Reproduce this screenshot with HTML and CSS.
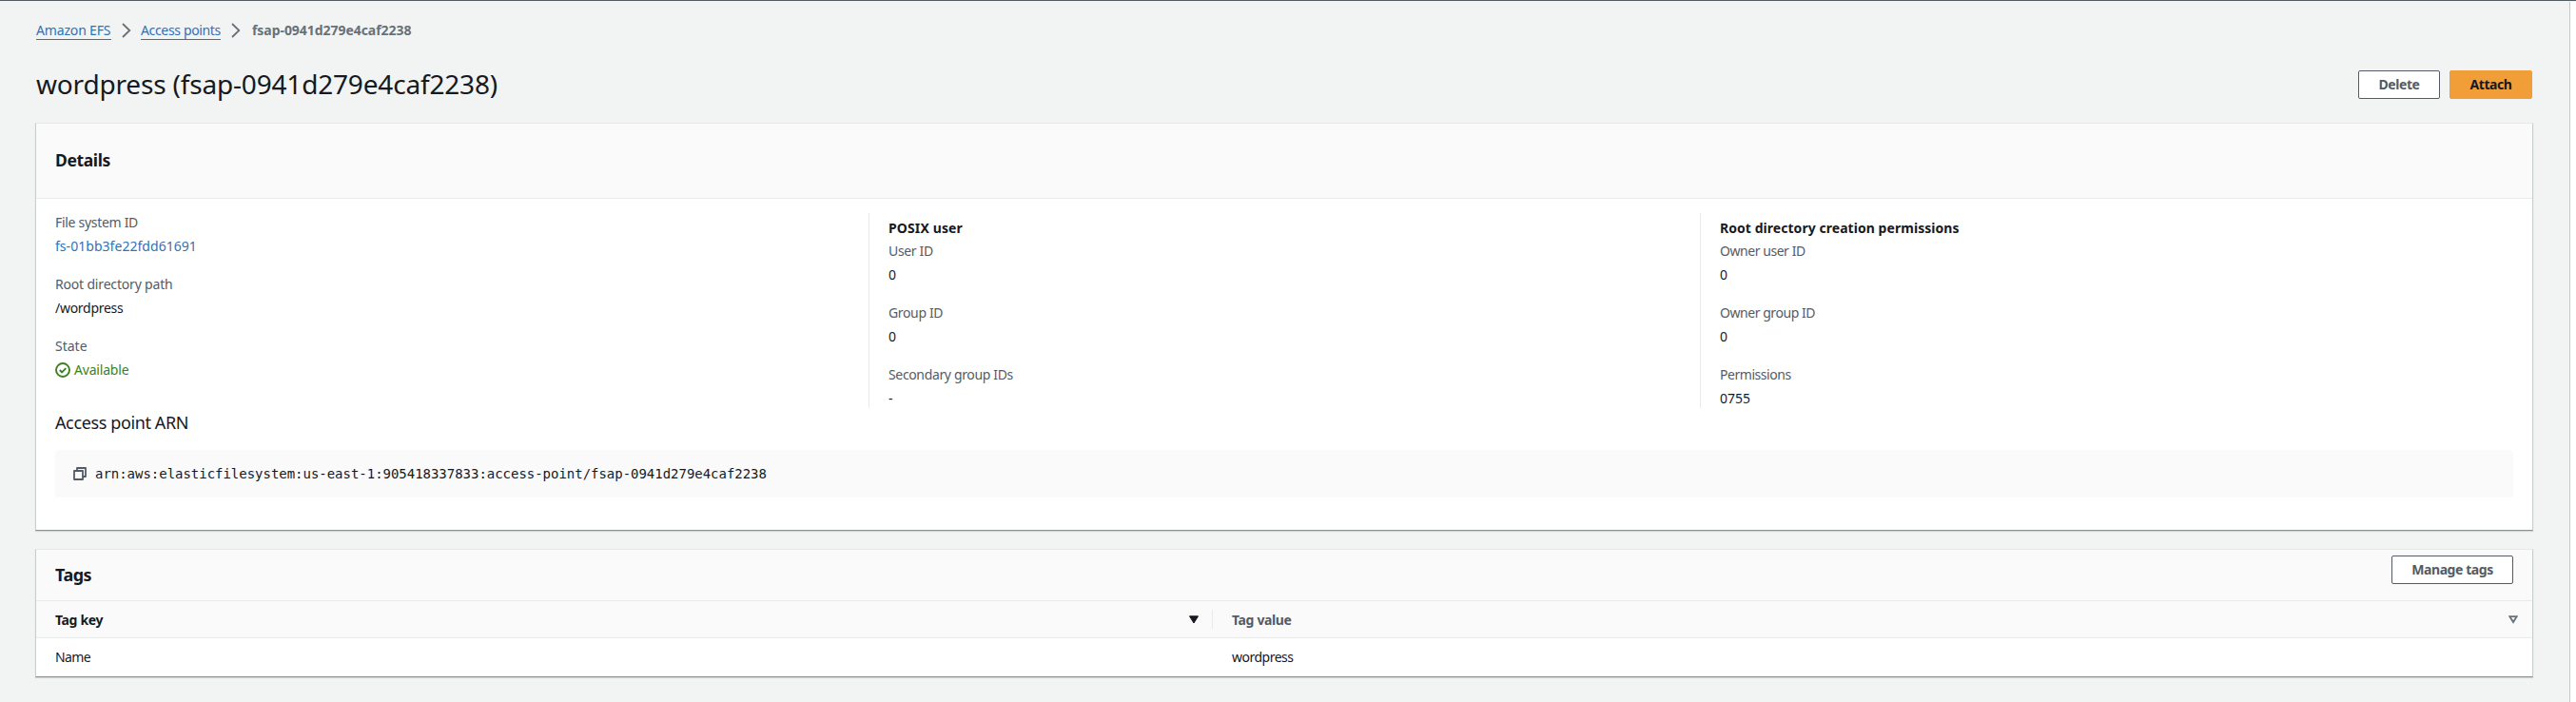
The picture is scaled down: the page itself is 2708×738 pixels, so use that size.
FILE: index.html
```html
<!DOCTYPE html>
<html lang="en">
<head>
<meta charset="utf-8">
<title>wordpress (fsap-0941d279e4caf2238)</title>
<link rel="stylesheet" href="styles.css">
</head>
<body>
<div class="app">
  <main class="main">
    <nav class="crumbs">
      <a class="crumb crumb-root">Amazon EFS</a>
      <svg class="chevron" width="10" height="16" viewBox="0 0 10 16"><path d="M1 1l7.3 7-7.3 7" fill="none" stroke="#687078" stroke-width="1.8"/></svg>
      <a class="crumb crumb-list">Access points</a>
      <svg class="chevron" width="10" height="16" viewBox="0 0 10 16"><path d="M1 1l7.3 7-7.3 7" fill="none" stroke="#687078" stroke-width="1.8"/></svg>
      <span class="crumb-current">fsap-0941d279e4caf2238</span>
    </nav>
    <header class="page-header">
      <h1>wordpress (fsap-0941d279e4caf2238)</h1>
      <div class="actions">
        <button class="btn btn-delete">Delete</button>
        <button class="btn btn-primary">Attach</button>
      </div>
    </header>

    <section class="card">
      <div class="card-head details-head"><h2>Details</h2></div>
      <div class="columns">
        <dl class="col col-first">
          <dt class="fs-label">File system ID</dt><dd class="link">fs-01bb3fe22fdd61691</dd>
          <dt>Root directory path</dt><dd class="path">/wordpress</dd>
          <dt class="state-label">State</dt>
          <dd class="status"><svg width="16" height="16" viewBox="0 0 16 16" fill="none" stroke="#3b8120"><circle cx="8" cy="8" r="7" stroke-width="1.9"/><path d="M4.8 8l2.3 2.3 4.2-4.2" stroke-width="1.9"/></svg><span>Available</span></dd>
        </dl>
        <div class="col col-ruled">
          <h3>POSIX user</h3>
          <dl>
            <dt>User ID</dt><dd>0</dd>
            <dt>Group ID</dt><dd>0</dd>
            <dt>Secondary group IDs</dt><dd>-</dd>
          </dl>
        </div>
        <div class="col col-ruled">
          <h3 class="permissions-title">Root directory creation permissions</h3>
          <dl class="owner">
            <dt>Owner user ID</dt><dd>0</dd>
            <dt>Owner group ID</dt><dd>0</dd>
            <dt>Permissions</dt><dd>0755</dd>
          </dl>
        </div>
      </div>
      <h4>Access point ARN</h4>
      <div class="arn">
        <svg width="14" height="14" viewBox="0 0 14 14" fill="none" stroke="#545b64" stroke-width="1.8" stroke-linejoin="round"><rect x="1" y="4" width="9" height="9"/><path d="M4 4V1h9v9h-3"/></svg>
        <code>arn:aws:elasticfilesystem:us-east-1:905418337833:access-point/fsap-0941d279e4caf2238</code>
      </div>
    </section>

    <section class="card tags">
      <div class="card-head tags-head"><h2>Tags</h2><button class="btn btn-manage">Manage tags</button></div>
      <div class="row row-head">
        <div class="cell cell-key">Tag key<svg width="10" height="9" viewBox="0 0 10 9"><path d="M.5.8h9L5 8z" fill="#16191f" stroke="#16191f" stroke-linejoin="round"/></svg></div>
        <div class="cell cell-value">Tag value<svg width="10" height="9" viewBox="0 0 10 9"><path d="M1.4 1.2h7.2L5 7z" fill="none" stroke="#687078" stroke-width="1.8"/></svg></div>
      </div>
      <div class="row">
        <div class="cell cell-name">Name</div>
        <div class="cell cell-text">wordpress</div>
      </div>
    </section>
  </main>
  <aside class="panel"></aside>
</div>
</body>
</html>
```
FILE: styles.css
```css
* { box-sizing: border-box; }
body {
  margin: 0;
  background: #f2f4f3;
  color: #16191f;
  font: 14px/25px "Noto Sans", "Open Sans", sans-serif;
}
h1, h2, h3, h4, dl, dt, dd { margin: 0; font-size: inherit; }

.app { display: flex; height: 738px; border-top: 1px solid #545b64; overflow: hidden; }
.main { flex: 1; padding: 0 38px 0 37px; }
.panel { width: 7px; margin-top: 1px; border-left: 1px solid #c3c8c8; background: #fff; }

.crumbs { display: flex; align-items: center; height: 21px; margin-top: 20px; padding-left: 1px; white-space: nowrap; }
.crumb { height: 21px; line-height: 22px; color: #2f72b7; border-bottom: 1px solid #2f72b7; }
.crumb-root { width: 79px; letter-spacing: -.16px; }
.crumb-list { width: 84px; letter-spacing: -.35px; }
.chevron { margin: 1px 10px 0 11px; }
.crumb-current { margin-left: 2px; color: #687078; font-weight: 700; line-height: 21px; letter-spacing: -.05px; }

.page-header { display: flex; justify-content: space-between; height: 87px; padding: 29px 1px 0; }
h1 { font-size: 28px; line-height: 34px; font-weight: 400; letter-spacing: -.18px; }
.actions { display: flex; gap: 10px; margin-top: 3px; }

.btn {
  height: 30px;
  padding: 0 0 1px;
  border: 1px solid #545b64;
  border-radius: 2px;
  background: #fff;
  color: #545b64;
  font: 700 14px/27px "Noto Sans", "Open Sans", sans-serif;
  letter-spacing: -.43px;
}
.btn-delete { width: 86px; }
.btn-primary { width: 87px; border-color: #f19e39; background: #f19e39; color: #16191f; }
.btn-manage { width: 128px; }

.card {
  height: 429px;
  border: 1px solid #c8cdcd;
  border-top-color: #e6e8e8;
  border-bottom: 1px solid #879196;
  background: #fff;
  box-shadow: 0 1px 1px #d0d5d5;
}
.card-head { display: flex; justify-content: space-between; background: #fafafa; border-bottom: 1px solid #e9ebeb; }
.card-head h2 { font-size: 17.5px; font-weight: 700; }
.details-head { height: 79px; padding: 26px 20px; }
.details-head h2 { letter-spacing: -.37px; }

.columns { display: grid; grid-template-columns: 875px 874px 1fr; height: 217px; padding-top: 12px; }
.col-first { padding-left: 20px; letter-spacing: -.18px; }
.col-ruled { height: 205px; margin-top: 3px; padding: 2px 0 0 20px; border-left: 1px solid #e9ebeb; letter-spacing: -.35px; }
.col-ruled h3 { height: 25px; padding-top: 1px; font-weight: 700; letter-spacing: .13px; }
.col-ruled .permissions-title { letter-spacing: .05px; }
.col-ruled .owner { letter-spacing: -.45px; }
dt { color: #545b64; }
dd { margin-bottom: 15px; }
.fs-label { letter-spacing: -.3px; }
.state-label { letter-spacing: 0; }
.path { letter-spacing: -.28px; }
.link { color: #2f72b7; letter-spacing: .04px; }
.owner dd { letter-spacing: 0; }
.status { display: flex; align-items: center; gap: 4px; color: #3b8120; letter-spacing: -.19px; }
.status svg { margin-top: 1px; }

h4 { height: 47px; padding: 6px 20px; font-size: 18px; font-weight: 400; letter-spacing: -.38px; }
.arn { display: flex; align-items: center; gap: 9px; height: 50px; margin: 0 20px; padding-left: 19px; border-radius: 4px; background: #fafafa; }
.arn code { font: 14px/25px "DejaVu Sans Mono", "Liberation Mono", monospace; letter-spacing: -.025px; }

.tags { height: 135px; margin-top: 19px; }
.tags-head { height: 54px; padding: 6px 20px 0; }
.tags-head h2 { margin-top: 8px; font-size: 18px; letter-spacing: -.5px; }
.row { display: grid; grid-template-columns: 1237px 1fr; height: 39px; align-items: center; }
.row-head { border-bottom: 1px solid #e9ebeb; background: #fafafa; font-weight: 700; letter-spacing: -.36px; }
.cell { display: flex; align-items: center; justify-content: space-between; }
.cell-key { height: 20px; padding: 0 14px 0 20px; border-right: 1px solid #e9ebeb; }
.cell-value { padding: 0 15px 0 20px; color: #545b64; }
.cell-name { padding-left: 20px; letter-spacing: -.6px; }
.cell-text { padding-left: 20px; letter-spacing: -.5px; }
```
